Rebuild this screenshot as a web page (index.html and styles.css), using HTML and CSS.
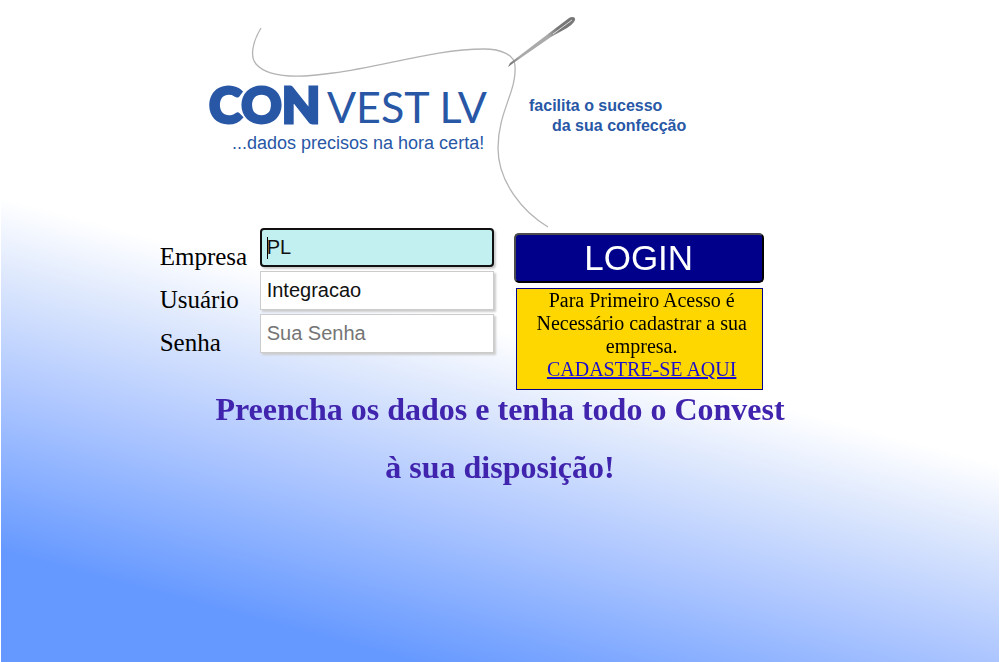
FILE: index.html
```html
<!DOCTYPE html>
<html lang="pt-BR">
<head>
<meta charset="utf-8">
<meta name="viewport" content="width=device-width, initial-scale=1">
<title>Convest LV</title>
<link rel="stylesheet" href="styles.css">
</head>
<body>
<main class="page">
  <header class="brand">
    <svg class="logo" viewBox="0 0 490 228" role="img" aria-label="Convest LV">
      <defs>
        <linearGradient id="steel" x1="0" y1="1" x2="1" y2="0">
          <stop offset="0" stop-color="#666"/>
          <stop offset="0.2" stop-color="#aaa"/>
          <stop offset="0.6" stop-color="#aaa"/>
          <stop offset="0.75" stop-color="#777"/>
          <stop offset="1" stop-color="#777"/>
        </linearGradient>
      </defs>
      <path class="thread" d="M61 28C52 43 50 57 56 64C67 77 93 79 133 73C185 66 236 49 284 49C301 49 315 55 315 66C317 91 298 112 298 148C298 182 323 212 348 227"/>
      <path d="M308 67L310 63L348 34L369 18C372 16 376 17 375 20C374 23 370 26 367 28L351 37L312 64Z" fill="url(#steel)"/>
      <path class="eye" d="M353 34L372 20"/>
      <text class="logo-bold" x="9" y="123">CON</text>
      <text class="logo-light" x="127" y="123">VEST LV</text>
      <text class="logo-tag" x="32" y="149">...dados precisos na hora certa!</text>
      <text class="logo-side" x="329" y="111">facilita o sucesso</text>
      <text class="logo-side" x="352" y="131">da sua confecção</text>
    </svg>
  </header>
  <form class="login">
    <div class="fields">
      <label for="empresa">Empresa</label>
      <input id="empresa" type="text" value="PL" autofocus>
      <label for="usuario">Usuário</label>
      <input id="usuario" type="text" value="Integracao">
      <label for="senha">Senha</label>
      <input id="senha" type="password" placeholder="Sua Senha">
    </div>
    <div class="actions">
      <button type="submit">LOGIN</button>
      <p class="signup">Para Primeiro Acesso é Necessário cadastrar a sua empresa. <a href="#cadastro">CADASTRE-SE AQUI</a></p>
    </div>
  </form>
  <h1>Preencha os dados e tenha todo o Convest à sua disposição!</h1>
</main>
</body>
</html>
```
FILE: styles.css
```css
* { box-sizing: border-box; }

body {
  margin: 0 1px;
  font-family: "Liberation Serif", "Times New Roman", serif;
  color: #000;
  background: #fff;
}

.page {
  min-height: 100vh;
  padding: 0 calc(16% - 1px);
  background: linear-gradient(15deg, #69f 12%, #adc6ff 29%, #dfe9fd 42%, #fff 50%);
}

.brand { padding-left: 40px; }

.logo {
  display: block;
  width: 490px;
  max-width: 100%;
}

.thread { fill: none; stroke: #b4b4b4; stroke-width: 1.3; }
.eye { stroke: #ddd; stroke-width: 1; }

.logo text { fill: #2857a6; }
.logo-bold { font: 900 50px Lato, sans-serif; stroke: #2857a6; stroke-width: 3; }
.logo-light { font: 400 43px Lato, sans-serif; }
.logo-tag { font: 18px "Liberation Sans", Arial, sans-serif; }
.logo-side { font: bold 16px "Liberation Sans", Arial, sans-serif; }

.login {
  display: flex;
  flex-wrap: wrap;
  gap: 20px;
}

.fields {
  display: grid;
  grid-template-columns: 100px 234px;
  grid-auto-rows: 39px;
  row-gap: 4px;
}

.fields label {
  padding-top: 15px;
  font-size: 25px;
  line-height: 28px;
}

.fields input {
  width: 100%;
  padding: 0 6px;
  border: 1px solid #ccc;
  border-radius: 0;
  background: #fff;
  color: #111;
  font: 20px "Liberation Sans", Arial, sans-serif;
  box-shadow: 2px 2px 2px #ccc;
}

.fields input::placeholder { color: #757575; }

.fields input:focus {
  border: 2px solid #101010;
  border-radius: 4px;
  outline: none;
  padding: 0 5px;
  background: linear-gradient(#000, #000) 5px center / 1px 22px no-repeat #c2f0f0;
}

.actions {
  width: 250px;
  padding-top: 5px;
}

.actions button {
  display: block;
  width: 100%;
  height: 50px;
  padding: 0;
  border: 2px solid;
  border-color: #4c4c4c #000 #000 #4c4c4c;
  border-radius: 5px;
  background: #00008b;
  color: #fff;
  font: 35px "Liberation Sans", Arial, sans-serif;
}

.signup {
  margin: 5px 1px 0 2px;
  padding: 0 10px 8px 15px;
  border: 1px solid #00008b;
  background: #ffd700;
  font-size: 20px;
  line-height: 23px;
  text-align: center;
}

.signup a { display: block; color: #1a0dce; }

h1 {
  margin: -10px auto 0;
  max-width: 590px;
  padding-bottom: 20px;
  color: #4024ad;
  font-size: 32px;
  line-height: 58px;
  text-align: center;
}
```
